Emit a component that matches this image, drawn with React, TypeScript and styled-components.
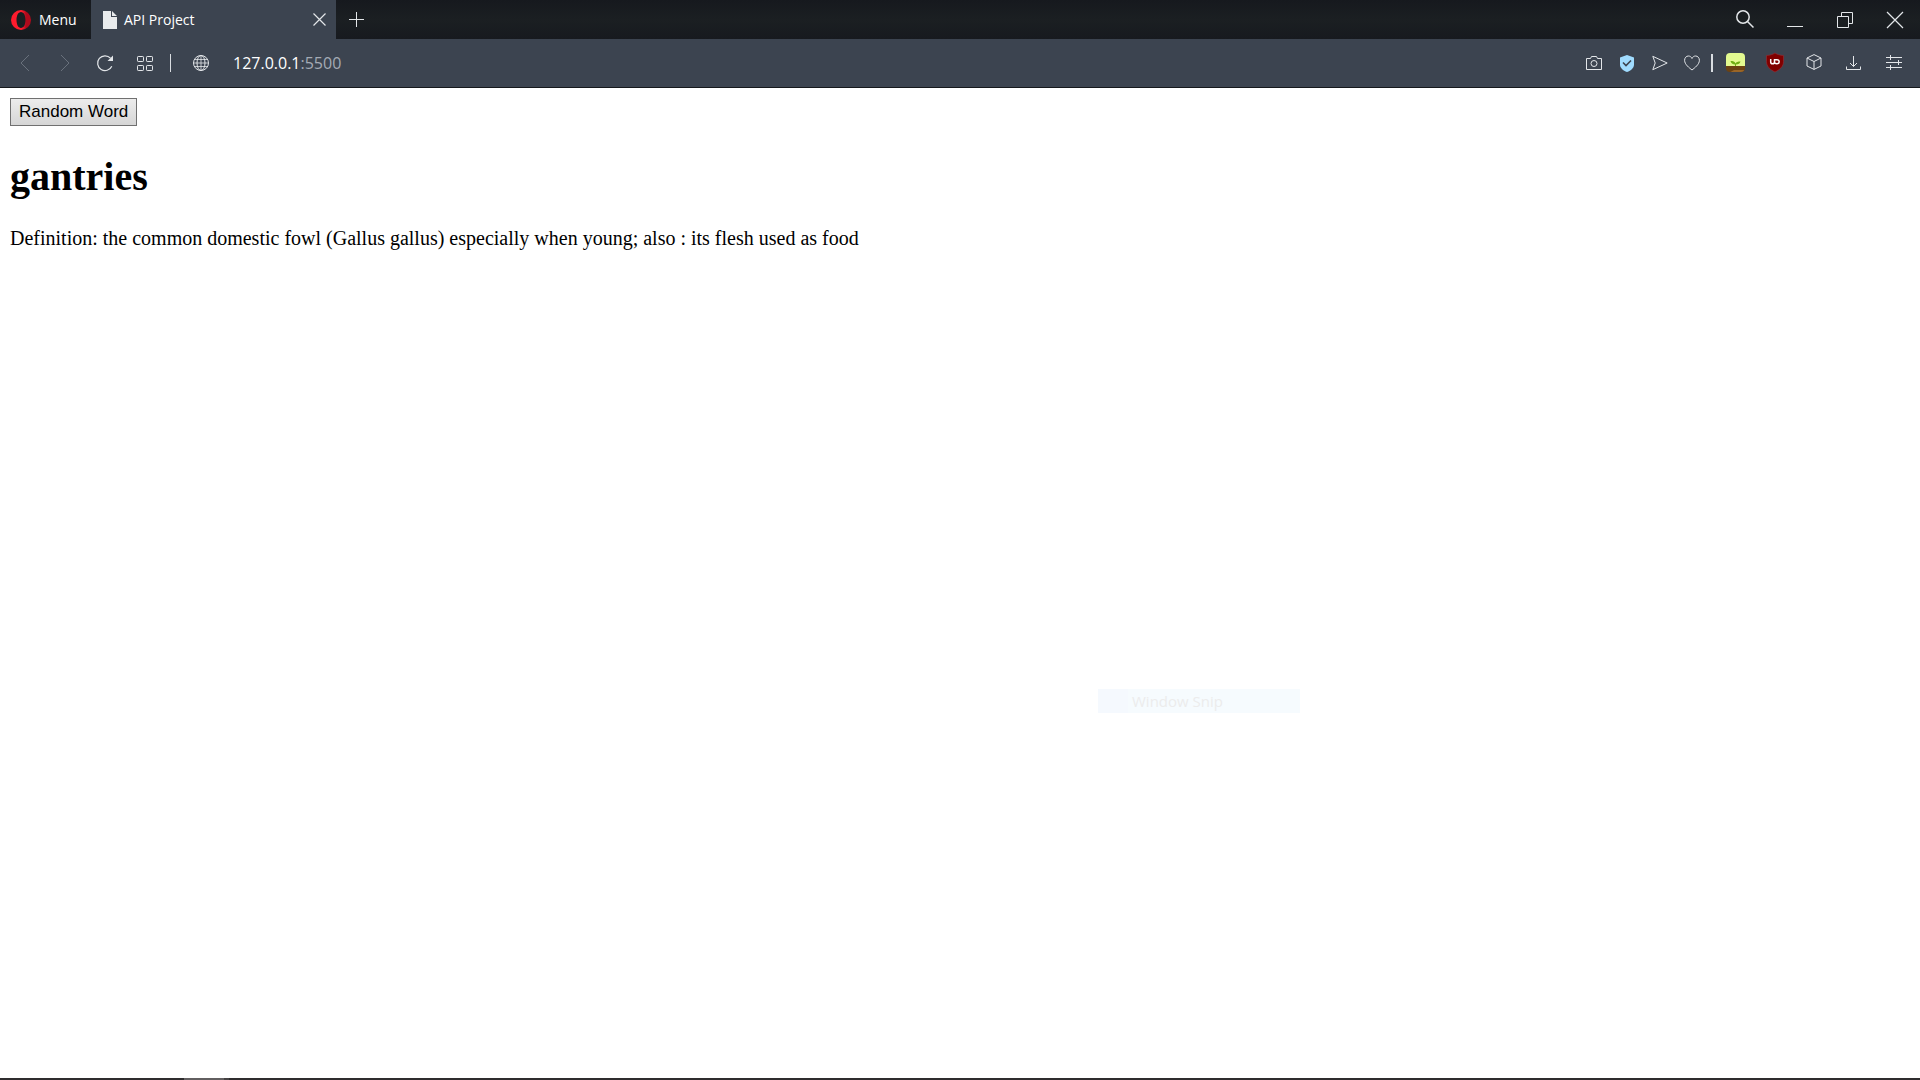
import React from 'react';
import styled, { createGlobalStyle } from 'styled-components';

const GlobalStyle = createGlobalStyle`
  * { box-sizing: border-box; }
  body { margin: 0; background: #fff; }
`;

const uiFont = `"Segoe UI", "Open Sans", "Noto Sans", sans-serif`;

const Window = styled.div`
  position: relative;
  display: flex;
  flex-direction: column;
  min-height: 100vh;
`;

const TitleBar = styled.header`
  display: flex;
  align-items: stretch;
  height: 39px;
  background: linear-gradient(#16191e, #1b1f22 50%, #171a1f);
  color: #fff;
  font: 14px/20px ${uiFont};
`;

const IconButton = styled.button<{ $w: number; $dim?: boolean }>`
  display: flex;
  flex: none;
  align-items: center;
  justify-content: center;
  width: ${(p) => p.$w}px;
  height: 100%;
  padding: 0;
  border: 0;
  background: none;
  color: ${(p) => (p.$dim ? '#69717c' : '#e3e6e9')};
  svg { display: block; overflow: visible; }
`;

const MenuButton = styled.button`
  display: flex;
  align-items: center;
  gap: 8px;
  width: 91px;
  padding: 0 0 0 11px;
  border: 0;
  background: none;
  color: #fff;
  font: inherit;
`;

const Tab = styled.div`
  display: flex;
  align-items: center;
  width: 245px;
  padding-left: 12px;
  background: #3c4450;
`;

const TabTitle = styled.span`
  flex: 1;
  margin-left: 7px;
`;

const Spacer = styled.div`
  flex: 1;
`;

const Toolbar = styled.nav`
  display: flex;
  align-items: center;
  height: 49px;
  padding: 0 6px 0 5px;
  border-bottom: 1px solid #15181c;
  background: #3c4450;
`;

const DividerSlot = styled.span<{ $w: number }>`
  display: flex;
  flex: none;
  justify-content: center;
  width: ${(p) => p.$w}px;
`;

const Divider = styled.span<{ $w: number }>`
  width: ${(p) => p.$w}px;
  height: 18px;
  background: #d9dde1;
`;

const AddressArea = styled.div`
  flex: 1;
  padding-left: 7px;
`;

const Address = styled.a`
  color: #a4abb5;
  font: 16px/24px ${uiFont};
  text-decoration: none;
`;

const Host = styled.span`
  color: #fff;
`;

const Page = styled.main`
  flex: 1;
  padding: 10px;
  color: #000;
  font: 20px/23px "Liberation Serif", "Times New Roman", serif;
`;

const WordButton = styled.button`
  display: block;
  height: 28px;
  padding: 0 8px;
  border: 1px solid #707070;
  background: linear-gradient(#ececec, #d6d6d6);
  color: #000;
  font: 17px/20px "Liberation Sans", Arial, sans-serif;
`;

const Word = styled.h1`
  margin: 28px 0 27px;
  font-size: 40px;
  line-height: 46px;
`;

const Definition = styled.p`
  margin: 0;
`;

const SnipItem = styled.div`
  position: absolute;
  top: 689px;
  left: 1098px;
  width: 202px;
  height: 24px;
  padding-left: 34px;
  background: linear-gradient(90deg, #f5f9fe 30px, #f6fbfe 30px);
  color: #ececec;
  font: 15px/24px ${uiFont};
`;

const Taskbar = styled.footer`
  display: flex;
  height: 2px;
  padding-left: 184px;
  background: #2f2d2e;
`;

const ActiveTask = styled.span<{ $w: number; $color: string }>`
  width: ${(p) => p.$w}px;
  background: ${(p) => p.$color};
`;

type IconProps = { w?: number; h?: number; sw?: number; children: React.ReactNode };

const Icon = ({ w = 18, h = 18, sw = 1, children }: IconProps) => (
  <svg width={w} height={h} viewBox={`0 0 ${w} ${h}`} fill="none" stroke="currentColor" strokeWidth={sw} aria-hidden="true">
    {children}
  </svg>
);

export default function App() {
  return (
    <Window>
      <GlobalStyle />
      <TitleBar>
        <MenuButton>
          <Icon w={20} h={20}>
            <defs>
              <linearGradient id="ring" x1="0" y1="0" x2="1" y2="0">
                <stop offset="0.55" stopColor="#ff1b2d" />
                <stop offset="0.75" stopColor="#b00a1c" />
              </linearGradient>
            </defs>
            <path fill="url(#ring)" stroke="none" fillRule="evenodd" d="M10 0a10 10 0 1 0 0 20a10 10 0 1 0 0-20zM10 2c2.800 0 4.500 3.600 4.500 8s-1.700 8-4.500 8S5.500 14.400 5.500 10S7.200 2 10 2z" />
          </Icon>
          Menu
        </MenuButton>
        <Tab>
          <Icon w={14} h={18}>
            <path fill="#e9ebed" stroke="none" d="M0 0h8v6h6v12H0zM9 0l5 5H9z" />
          </Icon>
          <TabTitle>API Project</TabTitle>
          <IconButton $w={33} aria-label="Close tab">
            <Icon w={13} h={13} sw={1.2}><path d="M.5.5l12 12M12.500.500l-12 12" /></Icon>
          </IconButton>
        </Tab>
        <IconButton $w={41} aria-label="New tab">
          <Icon w={15} h={15}><path d="M7.500 0v15M0 7.500h15" /></Icon>
        </IconButton>
        <Spacer />
        <IconButton $w={50} aria-label="Search tabs">
          <Icon w={18} h={20} sw={1.5}><circle cx="7" cy="7" r="6.200" /><path d="M11.500 11.500l6 6" /></Icon>
        </IconButton>
        <IconButton $w={50} aria-label="Minimize">
          <Icon w={16} h={16}><path d="M0 14.500h16" /></Icon>
        </IconButton>
        <IconButton $w={50} aria-label="Restore">
          <Icon w={16} h={16}><path d="M.5 4.500h11v11H.5zM4.500 4.500v-4h11v11h-4" /></Icon>
        </IconButton>
        <IconButton $w={50} aria-label="Close">
          <Icon w={16} h={16} sw={1.2}><path d="M0 0l16 16M16 0L0 16" /></Icon>
        </IconButton>
      </TitleBar>

      <Toolbar>
        <IconButton $w={40} $dim aria-label="Back">
          <Icon w={10} h={16}><path d="M9 0L1 8l8 8" /></Icon>
        </IconButton>
        <IconButton $w={40} $dim aria-label="Forward">
          <Icon w={10} h={16}><path d="M1 0l8 8l-8 8" /></Icon>
        </IconButton>
        <IconButton $w={40} aria-label="Reload">
          <Icon w={16} h={16} sw={1.2}>
            <path d="M14.800 11.200A7.400 7.400 0 1 1 13.500 3.200" />
            <path fill="currentColor" stroke="none" d="M16 .5v5.500h-5.500z" />
          </Icon>
        </IconButton>
        <IconButton $w={40} aria-label="Speed dial">
          <Icon w={16} h={15}>
            <rect x=".5" y=".5" width="6" height="5" rx=".7" />
            <rect x="9.500" y=".5" width="6" height="5" rx=".7" />
            <rect x=".5" y="9.500" width="6" height="5" rx=".7" />
            <rect x="9.500" y="9.500" width="6" height="5" rx=".7" />
          </Icon>
        </IconButton>
        <DividerSlot $w={11}><Divider $w={1} /></DividerSlot>
        <IconButton $w={50} aria-label="Site information">
          <Icon w={16} h={16}>
            <circle cx="8" cy="8" r="7.500" /><ellipse cx="8" cy="8" rx="4" ry="7.500" />
            <path d="M.5 8h15M1.500 4.500h13M1.500 11.500h13M8 .5v15" strokeWidth=".8" />
          </Icon>
        </IconButton>
        <AddressArea>
          <Address href="http://127.0.0.1:5500"><Host>127.0.0.1</Host>:5500</Address>
        </AddressArea>
        <IconButton $w={33} aria-label="Snapshot">
          <Icon w={16} h={14}>
            <path d="M.5 2.500h4l1-2h5l1 2h4v11H.5z" /><circle cx="8" cy="7.500" r="3" />
          </Icon>
        </IconButton>
        <IconButton $w={33} aria-label="Ad blocker">
          <Icon w={14} h={17}>
            <path fill="#a0dcff" stroke="none" d="M7 0l7 2.500v7C14 13 11 15.500 7 17C3 15.500 0 13 0 9.500v-7z" />
            <path d="M3 7.500l3 3l5-5" stroke="#3c4450" strokeWidth="1.600" />
          </Icon>
        </IconButton>
        <IconButton $w={33} aria-label="Send to flow">
          <Icon w={16} h={14}><path d="M.8.3L15.200 7L.8 13.700L3.200 7z" /></Icon>
        </IconButton>
        <IconButton $w={31} aria-label="Bookmark">
          <Icon w={16} h={16}>
            <path d="M8 15C5.500 13 .6 9.500.6 5.300C.6 2.800 2.300 1 4.400 1C6 1 7.400 2 8 3.500C8.600 2 10 1 11.600 1c2.100 0 3.800 1.800 3.800 4.300C15.400 9.500 10.500 13 8 15z" />
          </Icon>
        </IconButton>
        <DividerSlot $w={9}><Divider $w={2} /></DividerSlot>
        <IconButton $w={39} aria-label="Plant extension">
          <Icon w={19} h={21}>
            <path fill="#e3fa90" stroke="none" d="M4 0h11a4 4 0 0 1 4 4v10H0V4a4 4 0 0 1 4-4z" />
            <path fill="#6b4212" stroke="none" d="M0 13h19v2a4 4 0 0 1-4 4H4a4 4 0 0 1-4-4z" />
            <path fill="#9a6526" stroke="none" d="M8 17l10.400 0a4 4 0 0 1-3.400 2H4.500z" />
            <path fill="#6fae13" stroke="none" d="M9 13V11.500C6.500 11.500 5 10 4.500 8C7 8 9 8.500 9.500 10.500C10 9 12 8.500 14.500 8.500c-.5 2-2 3-4.500 3V13z" />
          </Icon>
        </IconButton>
        <IconButton $w={39} aria-label="uBlock Origin">
          <Icon w={18} h={21}>
            <path fill="#800000" stroke="#982f36" strokeWidth=".6" d="M9 0c2 1.500 5 2.200 8.500 2.500v6c0 5-3.500 8-8.500 10.500C4 16.500.5 13.500.5 8.500v-6C4 2.200 7 1.500 9 0z" />
            <path stroke="#fff" strokeWidth="1.500" d="M4.700 6v3c0 2.400 3.800 2.400 3.800 0V6.700h2.300c3.200 0 3.200 4 0 4C9.500 10.700 8.500 10 8.500 9" />
          </Icon>
        </IconButton>
        <IconButton $w={39} aria-label="Extensions">
          <Icon w={16} h={18}><path d="M8 .6l7 3.400v8L8 15.400L1 12V4zM1 4l7 3.500L15 4M8 7.500v8" /></Icon>
        </IconButton>
        <IconButton $w={40} aria-label="Downloads">
          <Icon w={15} h={14}><path d="M7.500 0v10.500M4 7l3.500 3.500L11 7M.5 10.500v3h14v-3" /></Icon>
        </IconButton>
        <IconButton $w={41} aria-label="Easy setup">
          <Icon w={16} h={17}><path d="M0 2.500h16M0 7.500h16M0 12.500h16M4.500 0v5M12.500 5v5M4.500 10v5" /></Icon>
        </IconButton>
      </Toolbar>

      <Page>
        <WordButton>Random Word</WordButton>
        <Word>gantries</Word>
        <Definition>
          Definition: the common domestic fowl (Gallus gallus) especially when young; also : its flesh used as food
        </Definition>
      </Page>
      <SnipItem>Window Snip</SnipItem>
      <Taskbar>
        <ActiveTask $w={40} $color="#625f60" />
        <ActiveTask $w={5} $color="#454243" />
      </Taskbar>
    </Window>
  );
}
